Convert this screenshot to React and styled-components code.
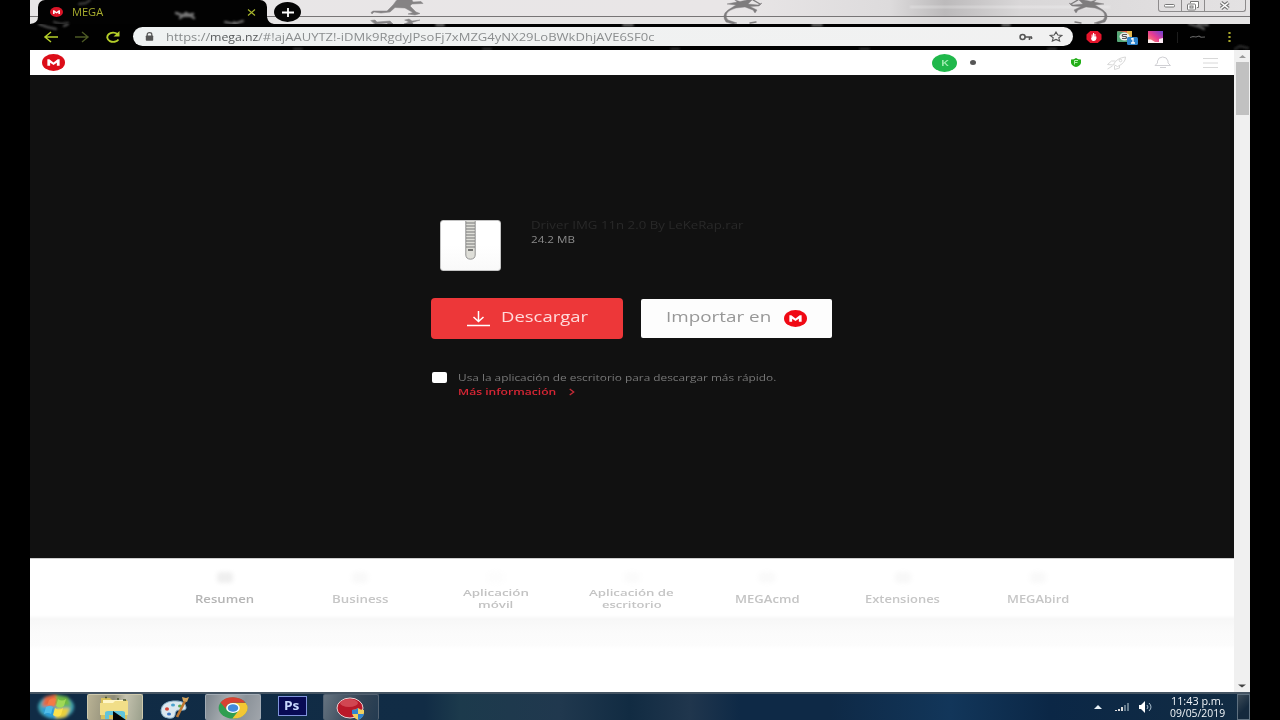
import React, { useLayoutEffect, useRef, useState } from "react";
import styled, { createGlobalStyle } from "styled-components";

const GlobalStyle = createGlobalStyle`
  * { box-sizing: border-box; }
  body { margin: 0; background: #000; font-family: "Open Sans", "Noto Sans", sans-serif; }
  svg { display: block; flex: none; }
`;

/* ---------- text that is stretched to a given width ---------- */
const FitBox = styled.span`
  display: block;
  flex: none;
  width: ${(p) => p.$w}px;
  height: ${(p) => p.$lh || 14}px;
  line-height: ${(p) => p.$lh || 14}px;
  font-size: ${(p) => p.$size}px;
  font-weight: ${(p) => p.$weight || 400};
  color: ${(p) => p.$color};
  text-align: left;
  white-space: nowrap;
`;
const FitInner = styled.span`
  display: inline-block;
  vertical-align: top;
  transform-origin: 0 50%;
`;
function FitText({ w, size, lh, weight, color, children }) {
  const ref = useRef(null);
  const [scale, setScale] = useState(1);
  useLayoutEffect(() => {
    const natural = ref.current.offsetWidth;
    if (natural) setScale(w / natural);
  }, [w, children]);
  return (
    <FitBox $w={w} $size={size} $lh={lh} $weight={weight} $color={color}>
      <FitInner ref={ref} style={{ transform: `scaleX(${scale})` }}>{children}</FitInner>
    </FitBox>
  );
}

/* ---------- frame ---------- */
const Screen = styled.div`
  width: 1280px;
  height: 720px;
  padding: 0 30px;
  overflow: hidden;
  background: #000;
`;
const Desktop = styled.div`
  display: flex;
  flex-direction: column;
  width: 1220px;
  height: 720px;
  background: #fff;
`;

/* ---------- title bar ---------- */
const TitleBar = styled.header`
  position: relative;
  display: flex;
  height: 24px;
  flex: none;
  overflow: hidden;
  background: linear-gradient(90deg, #e8e6e7 0, #e9e6e7 700px, #dddbdc 860px, #bcbabb 915px, #d9d7d8 990px, #e4e2e3 1220px);
`;
const Wallpaper = styled.svg`
  position: absolute;
  left: 0;
  top: 0;
`;
const Tab = styled.div`
  position: relative;
  display: flex;
  align-items: center;
  width: 229px;
  height: 24px;
  margin-left: 8px;
  padding: 0 11px 0 12px;
  background: #020202;
  border-radius: 7px 7px 0 0;
`;
const TabLabel = styled.div`
  margin-left: 9px;
  flex: 1;
`;
const NewTab = styled.button`
  position: relative;
  display: grid;
  place-items: center;
  width: 27px;
  height: 20px;
  margin: 2px 0 0 7px;
  padding: 0;
  border: 0;
  border-radius: 50%;
  background: #050505;
`;
const WindowButtons = styled.div`
  position: relative;
  display: flex;
  width: 88px;
  height: 12px;
  margin: 0 4px 0 auto;
  border: 1px solid #8d8b8c;
  border-top: 0;
  border-radius: 0 0 3px 3px;
`;
const WindowButton = styled.span`
  display: grid;
  place-items: center;
  width: ${(p) => p.$w}px;
  border-right: ${(p) => (p.$last ? "0" : "1px solid #8d8b8c")};
`;

/* ---------- toolbar ---------- */
const Toolbar = styled.div`
  position: relative;
  display: flex;
  align-items: center;
  height: 26px;
  flex: none;
  padding: 0 17px 0 13px;
  background: #010101;
`;
const Smoke = styled.svg`
  position: absolute;
  left: 0;
  top: 0;
  pointer-events: none;
`;
const NavIcons = styled.div`
  display: flex;
  gap: 15px;
  margin-right: 12px;
`;
const AddressBar = styled.div`
  display: flex;
  align-items: center;
  width: 940px;
  height: 19px;
  margin-top: -1px;
  padding: 0 10px 0 12px;
  border-radius: 10px;
  background: linear-gradient(90deg, #eff2f2, #f1f1f1);
`;
const Url = styled.div`
  display: flex;
  flex: 1;
  margin-left: 12px;
`;
const AddressIcons = styled.div`
  display: flex;
  align-items: center;
  gap: 16px;
`;
const Extensions = styled.div`
  display: flex;
  align-items: center;
  margin-left: 13px;
`;
const ExtensionSlot = styled.span`
  width: ${(p) => p.$w}px;
`;
const Divider = styled.span`
  width: 1px;
  height: 11px;
  margin: 0 12px 0 14px;
  background: #1d1d1d;
`;

/* ---------- page ---------- */
const Viewport = styled.div`
  display: flex;
  height: 642px;
  flex: none;
`;
const Page = styled.main`
  display: flex;
  flex-direction: column;
  width: 1204px;
  background: #fff;
`;
const SiteHeader = styled.div`
  display: flex;
  align-items: center;
  height: 25px;
  padding: 0 15px 0 12px;
  background: #fff;
`;
const Account = styled.div`
  display: flex;
  align-items: center;
  gap: 13px;
  margin-left: auto;
  margin-right: 94px;
`;
const Avatar = styled.span`
  display: grid;
  place-items: center;
  width: 25px;
  height: 18px;
  border-radius: 50%;
  background: #20b84b;
`;
const Dot = styled.span`
  width: 6px;
  height: 5px;
  border-radius: 50%;
  background: #555;
`;
const HeaderIcons = styled.div`
  display: flex;
  align-items: center;
`;
const Hero = styled.section`
  display: flex;
  flex-direction: column;
  height: 483px;
  padding: 145px 0 0 401px;
  background: #111;
`;
const FileRow = styled.div`
  display: flex;
  height: 51px;
  padding-left: 9px;
`;
const FileTile = styled.div`
  display: flex;
  justify-content: center;
  width: 61px;
  height: 51px;
  border: 1px solid #c4c4c4;
  border-radius: 3px;
  background: linear-gradient(#fff 50%, #f9f9f9);
`;
const FileInfo = styled.div`
  margin: -3px 0 0 30px;
`;
const Actions = styled.div`
  display: flex;
  gap: 18px;
  margin-top: 27px;
`;
const ActionButton = styled.button`
  display: flex;
  align-items: center;
  width: ${(p) => p.$w}px;
  height: ${(p) => p.$h}px;
  margin-top: ${(p) => p.$top || 0}px;
  padding: 0 0 0 ${(p) => p.$pad}px;
  gap: ${(p) => p.$gap}px;
  border: 0;
  border-radius: ${(p) => p.$radius}px;
  background: ${(p) => p.$bg};
  font-family: "Open Sans", sans-serif;
`;
const ButtonText = styled.span`
  padding-bottom: 3px;
`;
const AppOption = styled.div`
  display: flex;
  gap: 11px;
  margin: 32px 0 0 1px;
`;
const Checkbox = styled.span`
  width: 15px;
  height: 11px;
  margin-top: 1px;
  border-radius: 2px;
  background: #fff;
`;
const MoreLink = styled.a`
  display: flex;
  align-items: center;
  gap: 13px;
`;
const ProductNav = styled.nav`
  display: flex;
  height: 57px;
  padding-left: 127px;
  border-top: 1px solid #cfcfcf;
  background: #fff;
`;
const ProductItem = styled.div`
  display: flex;
  flex-direction: column;
  align-items: center;
  width: 135.6px;
  padding-top: 13px;
`;
const GhostIcon = styled.span`
  width: 16px;
  height: 11px;
  border-radius: 4px;
  background: ${(p) => p.$tone};
  filter: blur(2px);
`;
const ProductLabel = styled.div`
  display: flex;
  flex-direction: column;
  align-items: center;
  justify-content: center;
  height: 24px;
  margin-top: 4px;
`;
const Band = styled.div`
  height: 34px;
  background: linear-gradient(#fff 0, #f7f7f7 4px, #fbfbfb 18px, #fcfcfc 30px, #fff);
`;
const ScrollTrack = styled.aside`
  display: flex;
  flex-direction: column;
  align-items: center;
  justify-content: space-between;
  width: 16px;
  padding: 5px 0 4px;
  background: #f0f0f0;
`;
const ScrollTop = styled.div`
  display: flex;
  flex-direction: column;
  align-items: center;
  gap: 4px;
`;
const Thumb = styled.div`
  width: 13px;
  height: 53px;
  background: #c1c1c1;
`;

/* ---------- taskbar ---------- */
const Taskbar = styled.footer`
  display: flex;
  height: 28px;
  flex: none;
  border-top: 2px solid #465563;
  background: linear-gradient(90deg, #102b45 0, #112c45 395px, #1c3a4c 430px, #20384e 530px, #112b42 600px, #20364d 660px, #0e2946 710px, #0e2946 800px, #12365a 920px, #0b2746 1020px, #122c43 1220px);
`;
const StartButton = styled.div`
  width: 52px;
  margin-right: 5px;
`;
const TaskItem = styled.div`
  display: grid;
  place-items: center;
  width: ${(p) => p.$w || 56}px;
  height: 26px;
  margin-right: ${(p) => p.$mr || 0}px;
  border: 1px solid ${(p) => p.$edge || "transparent"};
  border-bottom: 0;
  border-radius: 2px;
  background: ${(p) => p.$bg || "transparent"};
`;
const PsBadge = styled.span`
  display: grid;
  place-items: center;
  width: 29px;
  height: 20px;
  margin-bottom: 3px;
  border: 1px solid #7f93dc;
  background: #080a54;
`;
const Tray = styled.div`
  display: flex;
  align-items: center;
  margin-left: auto;
`;
const Clock = styled.div`
  display: flex;
  flex-direction: column;
  align-items: center;
  width: 56px;
  margin: 0 12px 0 15px;
`;
const ShowDesktop = styled.span`
  width: 13px;
  height: 26px;
  border: 1px solid #5f7180;
  background: linear-gradient(135deg, #3d4c58, #14293d 60%);
`;

/* ---------- drawings ---------- */
const MegaMark = ({ w, h, color = "#dc0d18" }) => (
  <svg width={w} height={h} viewBox="0 0 24 24" preserveAspectRatio="none">
    <circle cx="12" cy="12" r="12" fill={color} />
    <path d="M5.6 16.5V7.5h2L12 12l4.400-4.500h2v9h-2.900v-4L12 15.600 8.500 12.500v4z" fill="#fff" />
  </svg>
);

const Runner = ({ x }) => (
  <g transform={`translate(${x} 0)`} fill="#858384" stroke="#858384" strokeLinecap="round" strokeLinejoin="round" strokeWidth=".5">
    <path d="M26 0 41 0 42 2 50 1.500 52 3.500 41 4 39 6 45 12 49 13.500 44 15 37 14 42 12.500 34 8 24 7.500 19 12 10 13 3 12 1 14 0 12.500 2 11 16 11 22 5z" />
    <path d="M0 20.500 4 20 6 22 19 21 22 24 17 24 16 23 4 24zM34 20l4-1 3 2 8-1-8 2.500 1 1.500H33l5-2z" />
  </g>
);

const Leaper = ({ x, flip }) => (
  <g transform={`translate(${x} 0) scale(${flip ? -1 : 1} 1)`} fill="#7e7c7d" stroke="#7e7c7d" strokeLinecap="round" strokeLinejoin="round">
    <path d="M11 0 16 1.500 23 0 28 0 24 4 34 5 38 3 35 6 26 6.500 33 10 31 13 29 10 21 7 12 8Q5 10 3 13 1 17 4 20L13 23 9 24 2 22Q-3 15 4 10L12 5 3 4 13 2z" strokeWidth=".4" />
    <path d="M29 0 36 4M26 23l6-1" fill="none" strokeWidth="1.400" />
  </g>
);

function TitleBackdrop() {
  return (
    <Wallpaper width="1220" height="24">
      <rect x="880" y="6" width="200" height="2" fill="#fff" opacity=".35" filter="url(#soft)" />
      <rect y="17" width="1220" height="7" fill="#e5e4e4" opacity=".75" />
      <Runner x={341} />
      <Leaper x={694} />
      <Leaper x={1077} flip />
      <path d="M0 16.500H1220" stroke="#777576" />
      <path d="M237 17q1 6 7 7h-7z" fill="#020202" />
      <path d="M0 24H8V17Q8 23 0 24Z" fill="#020202" />
    </Wallpaper>
  );
}

const products = [
  { lines: [["Resumen", 59]], tone: "#efefef", color: "#b5b5b5" },
  { lines: [["Business", 56]], tone: "#f9f9f9", color: "#c6c6c6" },
  { lines: [["Aplicación", 66], ["móvil", 35]], tone: "#fdfdfd", color: "#c2c2c2" },
  { lines: [["Aplicación de", 85], ["escritorio", 60]], tone: "#fbfbfb", color: "#c4c4c4" },
  { lines: [["MEGAcmd", 64]], tone: "#fafafa", color: "#c4c4c4" },
  { lines: [["Extensiones", 75]], tone: "#f8f8f8", color: "#c6c6c6" },
  { lines: [["MEGAbird", 62]], tone: "#f9f9f9", color: "#c6c6c6" },
];

function BrowserTop() {
  return (
    <>
      <TitleBar>
        <TitleBackdrop />
        <Tab>
          <Smoke width="229" height="24">
            <defs><filter id="soft"><feGaussianBlur stdDeviation="0.8" /></filter></defs>
            <g filter="url(#soft)" fill="none" strokeLinecap="round">
              <path d="M118 13 126 16 135 14M122 18 128 13 136 18" transform="translate(20 0)" stroke="#777" strokeWidth="2.500" />
              <path d="M16 22 23 24 30 23M41 4 48 3 52 0" stroke="#444" strokeWidth="2" />
              <path d="M187 22 196 24 205 21M196 22l3 2" stroke="#777" strokeWidth="2" />
            </g>
          </Smoke>
          <MegaMark w={13} h={10} color="#db1527" />
          <TabLabel><FitText w={31} size={10} color="#a8ad2e">MEGA</FitText></TabLabel>
          <svg width="9" height="7" viewBox="0 0 9 7"><path d="M1 .5 8 6.500M8 .5 1 6.500" stroke="#aab82e" strokeWidth="1.100" /></svg>
        </Tab>
        <NewTab aria-label="+">
          <svg width="12" height="9"><path d="M0 4.500H12M6 0V9" stroke="#fff" strokeWidth="1.800" /></svg>
        </NewTab>
        <WindowButtons>
          <WindowButton $w={23}><svg width="12" height="5"><rect x=".5" y="1.500" width="10" height="2.500" rx="1" fill="#fff" stroke="#777" /></svg></WindowButton>
          <WindowButton $w={24}><svg width="14" height="10"><path d="M4.500 2V.5h8v6H11" fill="#fff" stroke="#777" /><rect x="1.500" y="3" width="8" height="6" rx="1" fill="#fff" stroke="#777" /><rect x="4" y="5" width="3" height="2" fill="#eee" stroke="#777" /></svg></WindowButton>
          <WindowButton $w={40} $last><svg width="12" height="9"><path d="M2 1.500 9.500 7.500M9.500 1.500 2 7.500" stroke="#777" strokeWidth="3.600" /><path d="M2 1.500 9.500 7.500M9.500 1.500 2 7.500" stroke="#fff" strokeWidth="1.600" /></svg></WindowButton>
        </WindowButtons>
      </TitleBar>
      <Toolbar>
        <Smoke width="1220" height="26">
          <g filter="url(#soft)" fill="none" strokeLinecap="round">
            <path d="M9 0 17 3 26 5M38 0 34 2" stroke="#555" strokeWidth="2" />
            <path d="M406 1h8M593 1h10M782 1h10M972 1h8" stroke="#aaa" strokeWidth="1.500" />
            <path d="M453 25h8M641 25h8M830 25h9M264 25h8M1018 25h8" stroke="#333" strokeWidth="2" />
            <path d="M1159 0 1170 3 1174 5M1168 0 1178 1" stroke="#777" strokeWidth="1.800" />
            <path d="M1205 25 1210 22 1218 24" stroke="#333" strokeWidth="2" />
          </g>
        </Smoke>
        <NavIcons>
          <svg width="16" height="12" viewBox="0 0 16 12"><path d="M8 1 2 6l6 5M2 6h13" fill="none" stroke="#b5cf2a" strokeWidth="1.500" /></svg>
          <svg width="16" height="12" viewBox="0 0 16 12"><path d="m8 1 6 5-6 5M14 6H1" fill="none" stroke="#4c5924" strokeWidth="1.400" /></svg>
          <svg width="16" height="12" viewBox="0 0 16 12"><path d="M13.500 8.500A6 4.600 0 1 1 12.500 3" fill="none" stroke="#b5cf2a" strokeWidth="1.900" /><path d="M14.500 0v5.500H8.500z" fill="#b5cf2a" /></svg>
        </NavIcons>
        <AddressBar>
          <svg width="9" height="9" viewBox="0 0 9 9"><path d="M2.200 4V2.500Q2.200.7 4.500.7T6.800 2.500V4" fill="none" stroke="#555" strokeWidth="1.200" /><rect x=".8" y="3.500" width="7.400" height="5.200" rx=".7" fill="#555" /></svg>
          <Url>
            <FitText w={44} size={10} color="#85898a">https://</FitText>
            <FitText w={48} size={10} color="#55585a">mega.nz</FitText>
            <FitText w={396} size={10} color="#8b8e8f">/#!ajAAUYTZ!-iDMk9RgdyJPsoFj7xMZG4yNX29LoBWkDhjAVE6SF0c</FitText>
          </Url>
          <AddressIcons>
            <svg width="14" height="8" viewBox="0 0 14 8"><circle cx="3.600" cy="4" r="2.500" fill="none" stroke="#555" strokeWidth="1.600" /><path d="M6 4h7M10.500 4v3M12.500 4v2" stroke="#555" strokeWidth="1.600" /></svg>
            <svg width="14" height="11" viewBox="0 0 14 11"><path d="m7 1 1.800 3.100 4 .4-3 2.300.9 3.300L7 8.400 3.300 10.100l.9-3.300-3-2.300 4-.4z" fill="none" stroke="#555" strokeWidth="1.100" /></svg>
          </AddressIcons>
        </AddressBar>
        <Extensions>
          <ExtensionSlot $w={31}>
            <svg width="16" height="12" viewBox="0 0 17 12" preserveAspectRatio="none"><path d="M4.500 0h8L16.500 3.500v5L12.500 12h-8L.5 8.500v-5z" fill="#e5142b" /><path d="M6.500 6.500V3.500M8 6V2M9.500 6V3M6 6h4.500v1.500Q10 9.500 8 9.500T6 7" fill="#fff" stroke="#fff" strokeWidth="1.100" /></svg>
          </ExtensionSlot>
          <ExtensionSlot $w={31}>
            <svg width="23" height="16" viewBox="0 0 23 16"><rect y="2" width="15" height="11" rx="1" fill="#56a777" /><path d="M0 2h15v5L8 3z" fill="#e75a48" /><path d="M10 2h5v8l-5-3z" fill="#e4b64b" /><ellipse cx="7.500" cy="7.500" rx="5" ry="4" fill="#eee" /><path d="M10 5.500H6q-1.500 1 0 2h3q1 1 0 2H5" fill="none" stroke="#555" strokeWidth="1.200" /><rect x="10" y="8" width="11" height="8" rx="1.500" fill="#2d83cd" /><path d="m14 10 2-.5V14M14 14h4" fill="none" stroke="#fff" strokeWidth="1.300" /></svg>
          </ExtensionSlot>
          <svg width="15" height="12" viewBox="0 0 15 12"><defs><linearGradient id="insta" x1="0" y1="1" x2="1" y2="0"><stop stopColor="#ff9a6b" /><stop offset=".5" stopColor="#e73b91" /><stop offset="1" stopColor="#6a42d8" /></linearGradient></defs><rect width="15" height="12" fill="url(#insta)" /><path d="M0 8.500H3L7 11h8v1H0zM11 8l4-1v4h-4z" fill="#fff" opacity=".9" /></svg>
          <Divider />
          <svg width="16" height="6"><path d="M0 3.500 3 2.500 6 3 9 2 11 3.300 15 3" fill="none" stroke="#666" strokeWidth="1.100" /></svg>
          <svg width="26" height="12"><path d="M23.500 1v2M23.500 5v2M23.500 9v2" stroke="#a8a72a" strokeWidth="2.200" /></svg>
        </Extensions>
      </Toolbar>
    </>
  );
}

function MegaPage() {
  return (
    <Viewport>
      <Page>
        <SiteHeader>
          <MegaMark w={23} h={17} />
          <Account>
            <Avatar><FitText w={8} size={9} lh={12} weight={600} color="#a6f0b6">K</FitText></Avatar>
            <Dot />
          </Account>
          <HeaderIcons>
            <svg width="12" height="9" viewBox="0 0 12 9"><path d="M1 1.500Q4 1.500 6 0 8 1.500 11 1.500V5Q10 8 6 9 2 8 1 5z" fill="#22ae18" /><path d="M4.500 6.500V2.500H8M4.500 4.500h3" fill="none" stroke="#b4efac" /></svg>
            <svg width="62" height="14" viewBox="0 0 62 14"><g fill="none" stroke="#d8d8d8" transform="translate(-0.500 0)"><path d="M32 8.500Q35 2 44 1q0 6-8 9.500zM34 5h-4l-4 3.500 6 .5M38 10v2l-5 1.500V10M31 10l-5 3" /><circle cx="39" cy="4.500" r="1.300" /></g></svg>
            <svg width="46" height="13" viewBox="15 0 46 13"><path d="M26 9.500h15.500L39 7V5Q38 1 33.700 1T28.500 5v2zM31 11.500h6" fill="none" stroke="#d0d0d4" /></svg>
            <svg width="29" height="12"><path d="M13 1.500h15M13 6h15M13 10.500h15" stroke="#d8d8d8" /></svg>
          </HeaderIcons>
        </SiteHeader>
        <Hero>
          <FileRow>
            <FileTile>
              <svg width="11" height="39" viewBox="0 0 11 39"><path d="M.8 0V34Q1 38 5.500 38.200 10 38 10.200 34V0" fill="#deded8" stroke="#929292" /><path d="M1 2h9M1 5h9M1 8h9M1 11h9M1 14h9M1 17h9M1 20h9M1 23h9M1 26h9" stroke="#777" strokeWidth="1.200" /><path d="M3 29h5" stroke="#555" strokeWidth="1.500" /></svg>
            </FileTile>
            <FileInfo>
              <FitText w={213} size={11} lh={16} color="#292929">Driver IMG 11n 2.0 By LeKeRap.rar</FitText>
              <FitText w={44} size={9.5} lh={14} color="#8b8b8b">24.2 MB</FitText>
            </FileInfo>
          </FileRow>
          <Actions>
            <ActionButton $w={192} $h={41} $pad={36} $gap={11} $radius={4} $bg="#ed3739">
              <svg width="23" height="16" viewBox="0 0 23 16"><path d="M11.500 0v10M6.500 6l5 4.500 5-4.500M0 14.500h23" fill="none" stroke="#fff" strokeWidth="1.500" /></svg>
              <ButtonText><FitText w={87} size={14} lh={20} color="#ffdada">Descargar</FitText></ButtonText>
            </ActionButton>
            <ActionButton $w={191} $h={39} $top={1} $pad={25} $gap={13} $radius={2} $bg="#fdfdfd">
              <ButtonText><FitText w={105} size={14} lh={20} color="#979797">Importar en</FitText></ButtonText>
              <MegaMark w={23} h={17} color="#f00914" />
            </ActionButton>
          </Actions>
          <AppOption>
            <Checkbox />
            <div>
              <FitText w={318} size={9.5} lh={14} color="#777">Usa la aplicación de escritorio para descargar más rápido.</FitText>
              <MoreLink>
                <FitText w={98} size={9.5} lh={14} weight={600} color="#d92635">Más información</FitText>
                <svg width="6" height="8"><path d="m.7 1 4 3-4 3" fill="none" stroke="#c52c38" strokeWidth="1.300" /></svg>
              </MoreLink>
            </div>
          </AppOption>
        </Hero>
        <ProductNav>
          {products.map((p) => (
            <ProductItem key={p.lines[0][0]}>
              <GhostIcon $tone={p.tone} />
              <ProductLabel>
                {p.lines.map(([text, w]) => (
                  <FitText key={text} w={w} size={p.lines.length > 1 ? 9.5 : 10} lh={12} weight={600} color={p.color}>{text}</FitText>
                ))}
              </ProductLabel>
            </ProductItem>
          ))}
        </ProductNav>
        <Band />
      </Page>
      <ScrollTrack>
        <ScrollTop>
          <svg width="7" height="3"><path d="M0 3 3.500 0 7 3z" fill="#999" /></svg>
          <Thumb />
        </ScrollTop>
        <svg width="8" height="4"><path d="M0 .5h8L4 3.500z" fill="#444" /></svg>
      </ScrollTrack>
    </Viewport>
  );
}

function SystemBar() {
  return (
    <Taskbar>
      <StartButton>
        <svg width="52" height="26" viewBox="0 0 52 26">
          <defs><filter id="glow"><feGaussianBlur stdDeviation="1.6" /></filter></defs>
          <g filter="url(#glow)"><ellipse cx="26" cy="13" rx="18" ry="12" fill="#3d9faf" /><path d="M15 3 26 0v12H12z" fill="#e8663c" /><path d="M26 1 38 3l3 9H26z" fill="#6fb93f" /><path d="M26 14h14l-4 9-10 2z" fill="#e8cf3b" /><path d="M11 14h14v10l-9-2z" fill="#2c9fdc" /></g>
          <path d="M19 6q4-3 7-1l-2 7q-4-2-7 0z" fill="#f47a46" /><path d="M28 5q4 3 8 0l-2 7q-4 3-8 0z" fill="#a0d956" /><path d="M16 13q4-2 7 0l-2 7q-3-2-7 0z" fill="#50bdea" /><path d="M25 14q4 3 8 0l-2 7q-4 3-8 0z" fill="#fce24b" />
        </svg>
      </StartButton>
      <TaskItem $mr={4} $edge="#cfcaad" $bg="linear-gradient(100deg,#b9b294,#8e8c77 45%,#c4c2ae 65%,#9ba08c)">
        <svg width="36" height="25" viewBox="0 0 36 25">
          <path d="M4 3h9l2 2h15v19H4z" fill="#d8c15d" /><path d="M6 5h22v14H6z" fill="#fff6c7" /><path d="M3 8h13l2-2h13v14H3z" fill="#f1de88" />
          <path d="M8 2.500h2M20 4h2M26 5h3" stroke="#4c5a32" strokeWidth="1.500" />
          <path d="M8 24v-6q0-2 3-2h14q3 0 3 2v6h-4v-4H12v4z" fill="#61c4dc" /><path d="M16 16v9h13z" fill="#030607" />
        </svg>
      </TaskItem>
      <TaskItem $w={55} $mr={3}>
        <svg width="32" height="24" viewBox="0 0 32 24"><path d="M2 14Q3 6 14 5q12-1 13 6 1 4-7 3-4 0-4 5-1 4-7 3-7-1-7-8" fill="#dbe8ef" stroke="#8eb5cd" /><ellipse cx="8" cy="13" rx="2" ry="1.700" fill="#d74335" /><ellipse cx="14" cy="9" rx="2" ry="1.500" fill="#4ba3ce" /><ellipse cx="21" cy="10" rx="2" ry="1.500" fill="#55a951" /><ellipse cx="10" cy="18" rx="2" ry="1.500" fill="#3975c5" /><path d="M26 5 18 21" stroke="#bd7831" strokeWidth="2.600" /><path d="m24 5-1-4 4 1 3-1-2 5z" fill="#d7a760" /></svg>
      </TaskItem>
      <TaskItem $mr={3} $edge="#a2abb4" $bg="linear-gradient(110deg,#7b848c,#a6acb0 40%,#8b9299 65%,#a0a5ab)">
        <svg width="30" height="22" viewBox="0 0 24 24" preserveAspectRatio="none"><circle cx="12" cy="12" r="11.500" fill="#2f9e50" /><path d="M2 6A11.500 11.500 0 0 1 22 6.300H12A5.500 5.500 0 0 0 7 14z" fill="#d84132" /><path d="M12 6.500h10.200A11.500 11.500 0 0 1 11.500 23.500L17 14Q18.500 9 12 6.500" fill="#f3c733" /><circle cx="12" cy="12" r="5.500" fill="#fff" /><circle cx="12" cy="12" r="4.200" fill="#438bdc" /></svg>
      </TaskItem>
      <TaskItem $w={56} $mr={3}>
        <PsBadge><FitText w={16} size={12} lh={16} weight={700} color="#c8d6fc">Ps</FitText></PsBadge>
      </TaskItem>
      <TaskItem $edge="#536272" $bg="linear-gradient(110deg,#657380,#344556 60%,#243b51)">
        <svg width="30" height="24" viewBox="0 0 30 24"><ellipse cx="14" cy="12" rx="13" ry="10" fill="#b91829" stroke="#ead0d2" /><ellipse cx="13" cy="7" rx="9" ry="4" fill="#dc5a64" opacity=".7" /><path d="M16 14q4 0 6-2 2 2 6 2v3q-1 5-6 7-5-2-6-7z" fill="#f0d060" /><path d="M22 12v6h-6v-4q4 0 6-2M22 18h6q-1 4-6 6z" fill="#3384cf" /></svg>
      </TaskItem>
      <Tray>
        <svg width="9" height="4"><path d="M0 4 4 0l4 4z" fill="#e8f1f7" /></svg>
        <svg width="28" height="8"><path d="M12 8V7h2v1M15 8V6h2v2M18 8V4h2v4" fill="#ddd" /><path d="M21 8V2h2v6M24 8V0h2v8" fill="#667c8e" /></svg>
        <svg width="23" height="12"><path d="M8 4h2l4-4v12l-4-4H8z" fill="#fff" /><path d="M16 4q2 2 0 4M18 2q4 4 0 8" fill="none" stroke="#a9bdcc" /></svg>
        <Clock>
          <FitText w={53} size={10} lh={12} color="#f2f6f9">11:43 p.m.</FitText>
          <FitText w={55} size={10} lh={12} color="#f2f6f9">09/05/2019</FitText>
        </Clock>
        <ShowDesktop />
      </Tray>
    </Taskbar>
  );
}

export default function App() {
  return (
    <Screen>
      <GlobalStyle />
      <Desktop>
        <BrowserTop />
        <MegaPage />
        <SystemBar />
      </Desktop>
    </Screen>
  );
}
